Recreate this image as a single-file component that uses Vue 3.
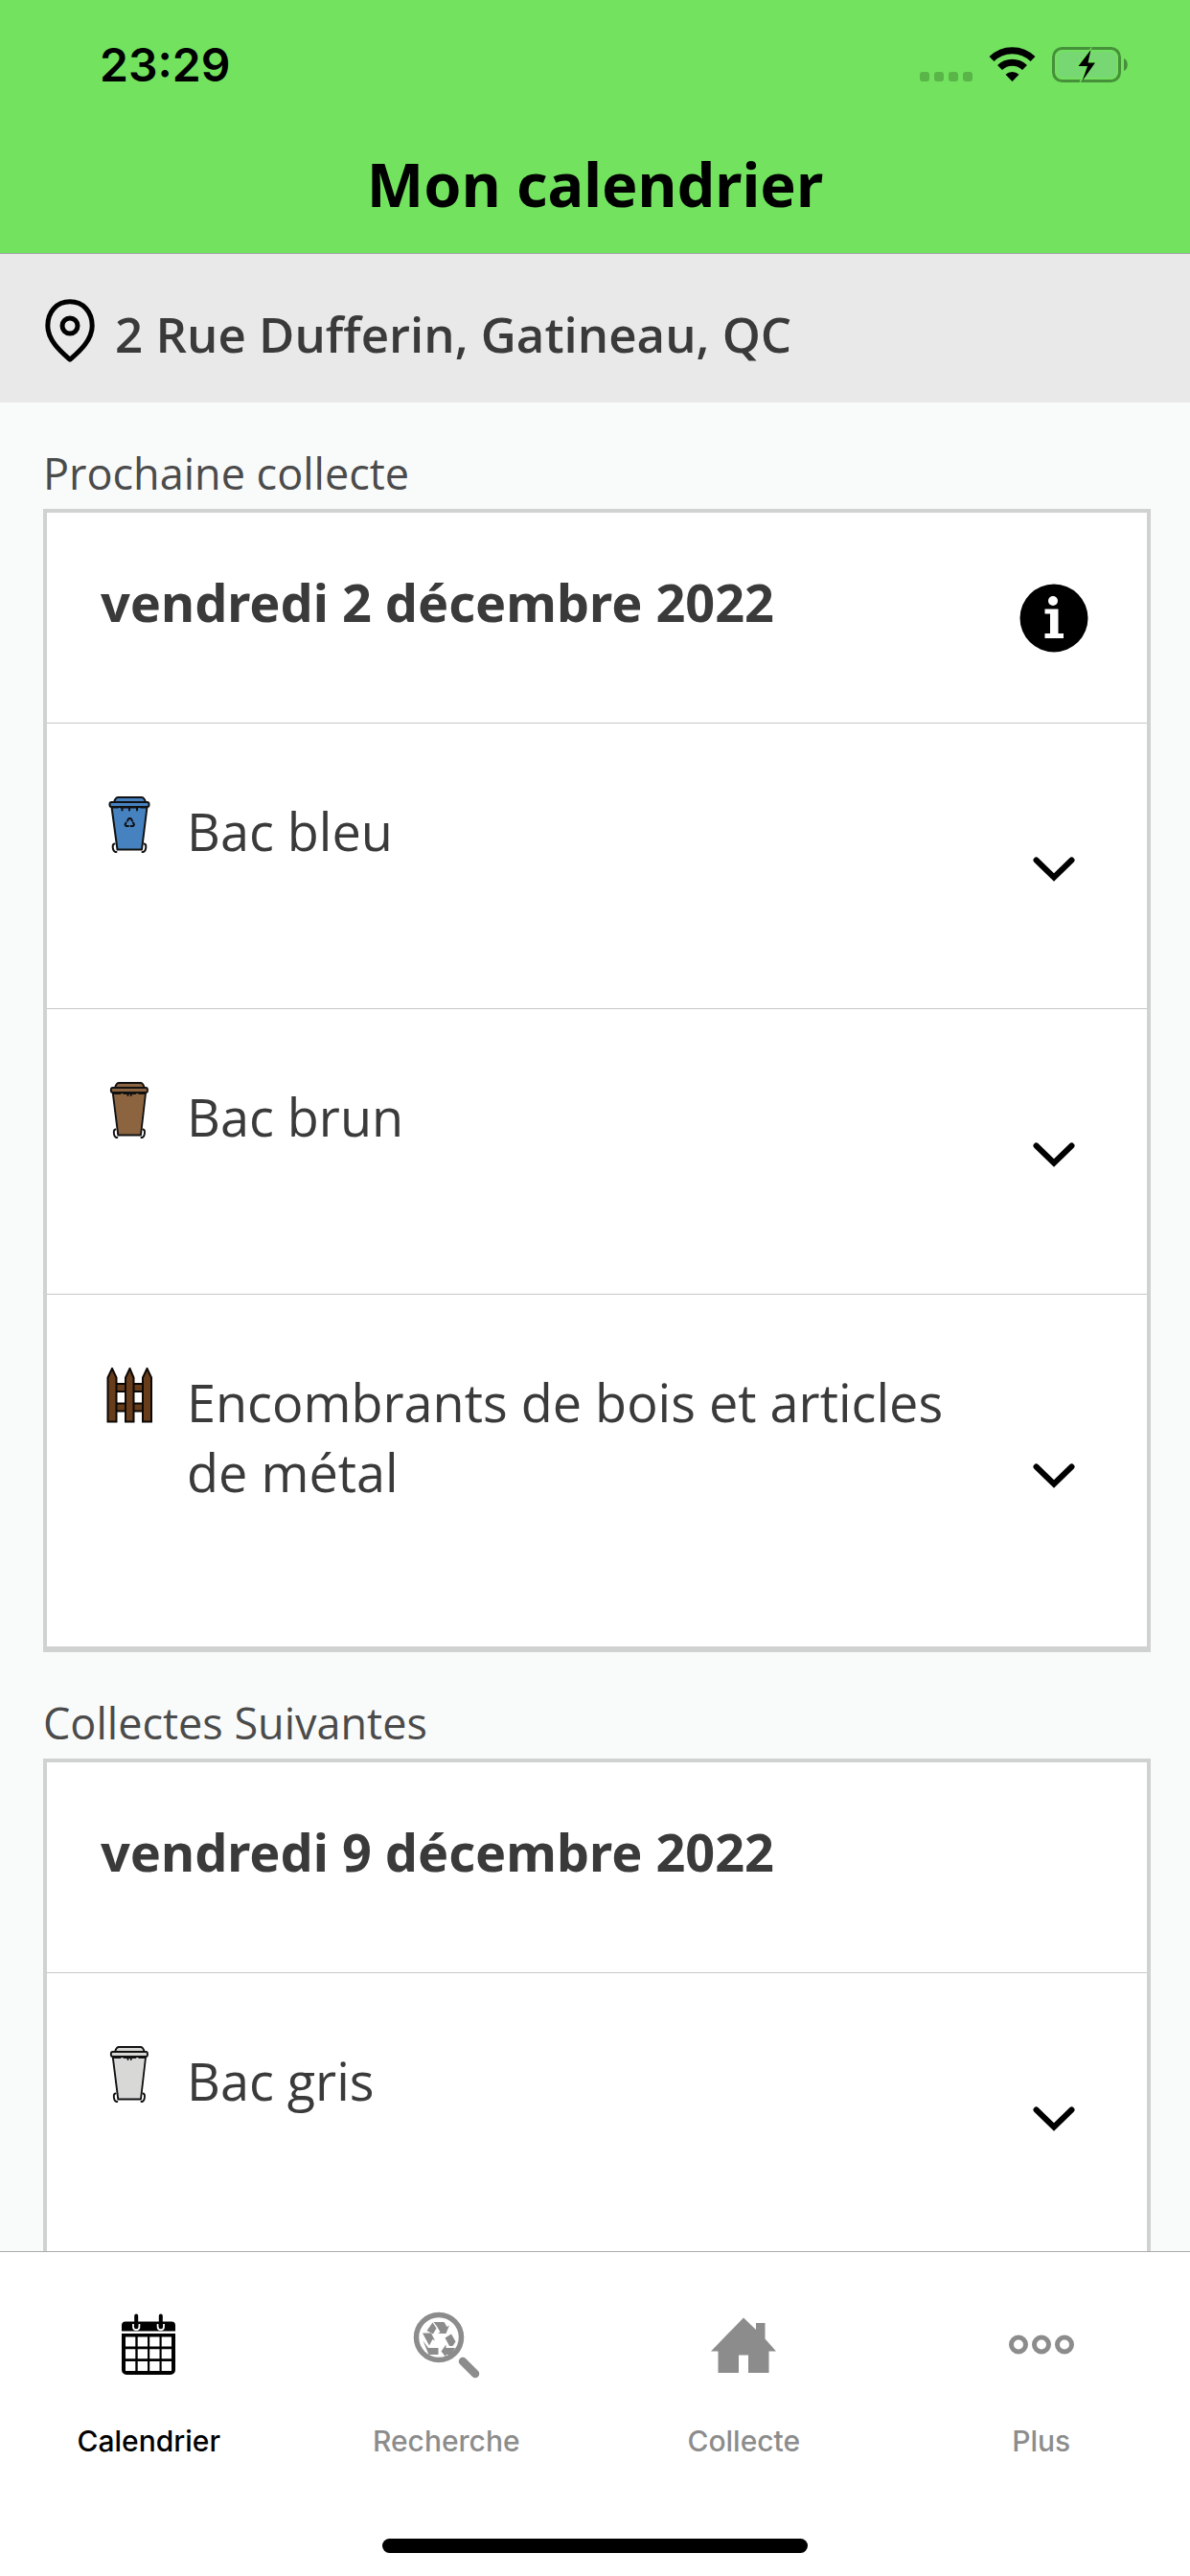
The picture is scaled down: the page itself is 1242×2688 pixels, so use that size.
<script setup>
import { ref } from 'vue'

const binShades = { bleu: '#4682c0', brun: '#8c6440', gris: '#d8d8d6' }

const sections = [
  {
    label: 'Prochaine collecte',
    date: 'vendredi 2 décembre 2022',
    info: true,
    items: [
      { name: 'Bac bleu', icon: 'bleu' },
      { name: 'Bac brun', icon: 'brun' },
      { name: 'Encombrants de bois et articles de métal', icon: 'fence' }
    ]
  },
  {
    label: 'Collectes Suivantes',
    date: 'vendredi 9 décembre 2022',
    info: false,
    items: [{ name: 'Bac gris', icon: 'gris' }]
  }
]

const tabs = [
  { id: 'calendar', label: 'Calendrier' },
  { id: 'search', label: 'Recherche' },
  { id: 'home', label: 'Collecte' },
  { id: 'more', label: 'Plus' }
]
const active = ref('calendar')
</script>

<template>
  <div class="app">
    <header class="top">
      <div class="status">
        <span class="time">23:29</span>
        <svg class="indicators" viewBox="0 0 220 40" aria-hidden="true">
          <g fill="#5ab548">
            <rect x="0" y="27" width="10" height="10" rx="3" />
            <rect x="15" y="27" width="10" height="10" rx="3" />
            <rect x="30" y="27" width="10" height="10" rx="3" />
            <rect x="45" y="27" width="10" height="10" rx="3" />
          </g>
          <path d="M96.500 37l-7-7.300a10.200 10.200 0 0 1 14 0z" />
          <path d="M83.500 23.500a18.500 18.500 0 0 1 26 0M75 14.500a30.500 30.500 0 0 1 43 0" transform="translate(0 -1)" fill="none" stroke="#000" stroke-width="7" />
          <rect x="139.500" y="2.500" width="69" height="34" rx="9" fill="none" stroke="#46903a" stroke-width="3" />
          <rect x="143" y="6" width="62" height="27" rx="6" fill="#77d873" />
          <path d="M213 13c5 2 5 11 0 13z" fill="#46903a" />
          <path d="M180 0L162 22h10l-6 18 19-25h-10l5-15z" fill="#72e25f" />
          <path d="M178.500 4L165.500 21h9.500l-5.500 15.500L183 17.500h-7.500z" />
        </svg>
      </div>
      <h1 class="title">Mon calendrier</h1>
    </header>

    <div class="address">
      <svg class="pin" viewBox="0 0 52 66" aria-hidden="true">
        <path d="M26 2.800C12 2.800 2.800 13.500 2.800 28c0 16 15.700 28.500 23.200 35.200C33.500 56.500 49.200 44 49.200 28 49.200 13.500 40 2.800 26 2.800z" fill="none" stroke="#000" stroke-width="5" stroke-linejoin="round" />
        <circle cx="26" cy="28" r="8" fill="none" stroke="#000" stroke-width="5" />
      </svg>
      <span>2 Rue Dufferin, Gatineau, QC</span>
    </div>

    <main class="content">
      <section v-for="section in sections" :key="section.date" class="section">
        <h2 class="label">{{ section.label }}</h2>
        <div class="card">
          <div class="card-head">
            <h3 class="date">{{ section.date }}</h3>
            <button v-if="section.info" class="side" type="button" aria-label="Informations">
              <svg class="info" viewBox="0 0 72 72" aria-hidden="true">
                <circle cx="36" cy="36" r="35.500" />
                <g fill="#fff">
                  <circle cx="35" cy="18" r="5" />
                  <path d="M26.500 26.500h14v25.500h5.500v5H26.500v-5h5.500V31.500h-5.500z" />
                </g>
              </svg>
            </button>
          </div>
          <ul class="items">
            <li v-for="item in section.items" :key="item.name">
              <button class="row" type="button">
                <svg v-if="item.icon === 'fence'" class="icon" viewBox="0 0 60 60" aria-hidden="true">
                  <g fill="#673d1c" stroke="#0c0805" stroke-width="2">
                    <path d="M15 17h32v8H15zM15 37.500h32v8H15z" />
                    <path d="M7.500 56.500V10.500L12 1l4.500 9.500v46zM26 56.500V10.500L30.500 1l4 9.500v46zM44 56.500V10.500L48.500 1l4.500 9.500v46z" />
                  </g>
                </svg>
                <svg v-else class="icon" viewBox="0 0 60 60" aria-hidden="true">
                  <g :transform="item.icon === 'bleu' ? undefined : 'translate(2 0) scale(.93 1)'" stroke="#111" stroke-width="2" stroke-linejoin="round" stroke-linecap="round" fill="none">
                    <path d="M14.500 49.500c-3 .500-2 7.500 1 8.500h1M45.500 49.500c3 .500 2 7.500-1 8.500h-1" />
                    <path :fill="binShades[item.icon]" d="M11.500 11h37L43 55.500H17.500z" />
                    <path :fill="binShades[item.icon]" d="M14 6c1-3.500 2-5 4.500-5h24c2.500 0 3.500 1.500 4.500 5z" />
                    <rect :fill="binShades[item.icon]" x="9.500" y="6" width="41" height="5" rx="2" />
                    <path v-if="item.icon === 'bleu'" d="M12 11.500h6M21 11.500h18M42 11.500h6M22.500 12v2.500M30 12v2.500M38 12v2.500" />
                    <path v-else d="M13 12h7M24 12h13M41 12h6M28.500 12v2M32 12v2" />
                    <path v-if="item.icon === 'bleu'" d="M28 25.500l1.500-2.500h2l1.500 2.500M34 27.500l1 2-1 1.500h-2.500M29 31h-2.500l-1-1.500 1-2" />
                  </g>
                </svg>
                <span class="name">{{ item.name }}</span>
                <span class="side">
                  <svg class="chevron" viewBox="0 0 44 26" aria-hidden="true">
                    <path d="M3.500 3.500L22 21.500 40.500 3.500" fill="none" stroke="#000" stroke-width="6" stroke-linecap="round" />
                  </svg>
                </span>
              </button>
            </li>
          </ul>
        </div>
      </section>
    </main>

    <nav class="tabs">
      <div class="tab-list">
        <button
          v-for="tab in tabs"
          :key="tab.id"
          type="button"
          class="tab"
          :class="{ active: active === tab.id }"
          @click="active = tab.id"
        >
          <svg class="tab-icon" viewBox="0 0 70 70" fill="currentColor" aria-hidden="true">
            <g v-if="tab.id === 'calendar'">
              <path d="M7 20.500v-6a4 4 0 0 1 4-4h48a4 4 0 0 1 4 4v6z" />
              <path d="M19 13v3a3.200 3.200 0 0 0 6.400 0v-3M44.600 13v3a3.200 3.200 0 0 0 6.400 0v-3" fill="none" stroke="#fff" stroke-width="1.800" />
              <path d="M22.200 4.500V14M47.800 4.500V14" stroke="currentColor" stroke-width="4" stroke-linecap="round" />
              <path fill-rule="evenodd" d="M7 23h56v38a5 5 0 0 1-5 5H12a5 5 0 0 1-5-5zM11 26.500v10h10.300v-10zm12.700 0v10H34v-10zm12.500 0v10h10.300v-10zm12.500 0v10H59v-10zM11 39.200v10h10.300v-10zm12.700 0v10H34v-10zm12.500 0v10h10.300v-10zm12.500 0v10H59v-10zM11 52v10h10.300V52zm12.700 0v10H34V52zm12.500 0v10h10.300V52zm12.500 0v10H59V52z" />
            </g>
            <g v-else-if="tab.id === 'search'">
              <circle cx="27" cy="27" r="23.500" fill="none" stroke="currentColor" stroke-width="5.500" />
              <path d="M52 52l13 13" stroke="currentColor" stroke-width="8.500" stroke-linecap="round" />
              <path d="M21.500 11h11l3 5 2.500-1.500-3.500 8.500h-8.500l2.500-1.500-3.500-6z" />
              <path d="M20.500 11.500l4 6-3.500 6-6.500-3.500z" />
              <path d="M10 22.500h9l4 8-2.500-1.500-3.500 6.500z" />
              <path d="M10.500 30.500l5.500 7.500h10.500v7H16.500z" />
              <path d="M29.500 41.500l5-7v3.500h9.500l-4 7h-5.500v3z" />
              <path d="M33.500 27.500l6.500-4 4.500 8-3 4.500h-3.500z" />
            </g>
            <path v-else-if="tab.id === 'home'" d="M35 6.500l13 12.500v-7h9.500v16.500L69 41.500h-7.500V64H40V45.500H30V64H8.500V41.500H1z" />
            <g v-else fill="none" stroke="currentColor" stroke-width="5">
              <circle cx="11" cy="34.500" r="7.500" />
              <circle cx="35" cy="34.500" r="7.500" />
              <circle cx="59" cy="34.500" r="7.500" />
            </g>
          </svg>
          <span>{{ tab.label }}</span>
        </button>
      </div>
      <div class="home-bar"></div>
    </nav>
  </div>
</template>

<style>
body {
  margin: 0;
}
</style>

<style scoped>
.app {
  display: flex;
  flex-direction: column;
  height: 100vh;
  background: #f9fbfa;
  color: #3a3a3a;
  font-family: "Open Sans", "Noto Sans", sans-serif;
}
button {
  border: 0;
  padding: 0;
  background: none;
  color: inherit;
  font: inherit;
  text-align: left;
}
svg {
  display: block;
  flex: none;
}
h1, h2, h3, ul {
  margin: 0;
  padding: 0;
}
.top {
  flex: none;
  background: #72e25f;
  border-bottom: 1px solid #a0a4a0;
  color: #000;
}
.status {
  display: flex;
  justify-content: space-between;
  align-items: center;
  height: 136px;
  padding: 0 62px 0 104px;
}
.time {
  font: 600 48px/60px Inter, sans-serif;
}
.indicators {
  width: 220px;
  height: 40px;
}
.title {
  padding: 6px 0 22px;
  font-family: "Noto Sans", "Open Sans", sans-serif;
  font-size: 63px;
  line-height: 100px;
  font-weight: 700;
  text-align: center;
}
.address {
  display: flex;
  flex: none;
  align-items: center;
  gap: 21px;
  height: 155px;
  padding: 0 47px;
  background: #e9e9e9;
  font-size: 51px;
  line-height: 70px;
  font-weight: 600;
}
.pin {
  width: 52px;
  height: 66px;
  padding-top: 4px;
}
.address span {
  padding-top: 10px;
}
.content {
  flex: 1;
  min-height: 0;
  overflow-y: auto;
  scrollbar-width: none;
  padding: 0 41px 0 45px;
}
.label {
  padding: 43px 0 7px;
  color: #4b4b4b;
  font-size: 45px;
  line-height: 61px;
  font-weight: 400;
}
.card {
  border: 4px solid #d0d1d1;
  border-bottom-width: 6px;
  background: #fff;
}
.card-head {
  display: flex;
  align-items: center;
  justify-content: space-between;
  padding-right: 52px;
  padding-left: 56px;
}
.date {
  padding: 57px 0 89px;
  font-family: "Noto Sans", "Open Sans", sans-serif;
  font-size: 54px;
  line-height: 73px;
  font-weight: 700;
}
.side {
  display: flex;
  flex: none;
  justify-content: center;
  align-self: center;
  width: 90px;
}
.info {
  width: 72px;
  height: 72px;
}
.items {
  list-style: none;
}
.items li {
  border-top: 1px solid #c8c8ca;
}
.row {
  display: flex;
  align-items: flex-start;
  gap: 30px;
  width: 100%;
  padding: 76px 52px 69px 56px;
}
.items li:last-child .row {
  padding-bottom: 66px;
}
.icon {
  width: 60px;
  height: 60px;
}
.name {
  flex: 1;
  padding-bottom: 79px;
  font-size: 54px;
  line-height: 73px;
}
.chevron {
  width: 44px;
  height: 26px;
}
.tabs {
  flex: none;
  border-top: 1px solid #a9abaa;
  background: #fff;
}
.tab-list {
  display: grid;
  grid-template-columns: repeat(4, 1fr);
}
.tab {
  display: flex;
  flex-direction: column;
  align-items: center;
  gap: 45px;
  padding: 62px 0 82px;
  color: #8c8c8c;
  font: 500 30px/40px Inter, sans-serif;
}
.tab.active {
  color: #000;
}
.tab-icon {
  width: 70px;
  height: 70px;
}
.home-bar {
  width: 444px;
  height: 15px;
  margin: 0 auto 24px;
  border-radius: 8px;
  background: #000;
}
</style>
